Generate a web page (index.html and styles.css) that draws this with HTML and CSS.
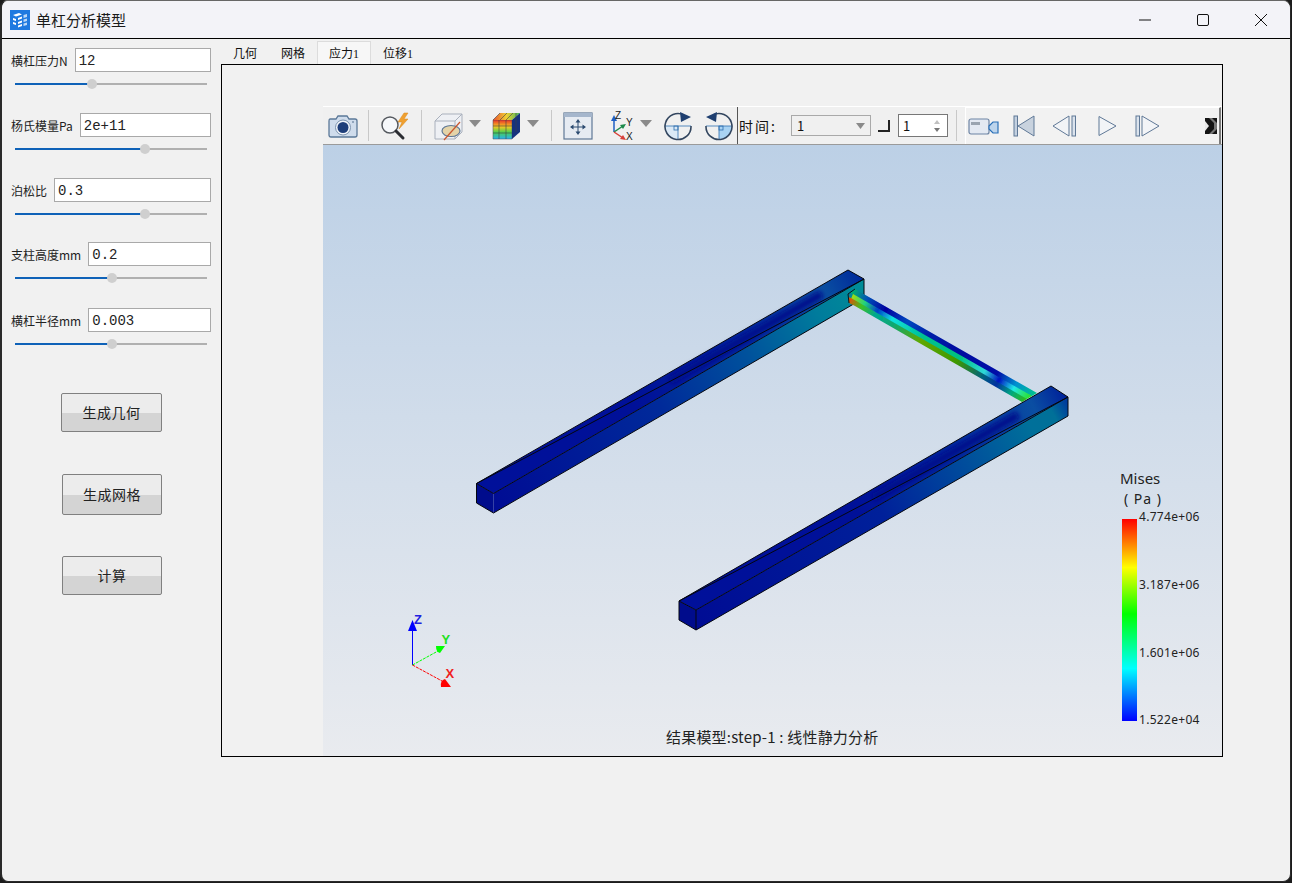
FILE: index.html
```html
<!DOCTYPE html>
<html>
<head>
    <meta charset="UTF-8">
    <title>单杠分析模型</title>
    <link rel="stylesheet" href="styles.css">
</head>
<body>
    <div class="window">
        <div class="titlebar">
            <svg class="app-icon" width="20" height="20" viewBox="0 0 20 20">
                <rect width="20" height="20" fill="#1f7ae0"></rect>
                <path d="M3 5 L9 3 L12 4.500 L6 6.500 Z M3 8 L6 9 L6 11 L3 10 Z M3 12 L6 13 L6 15 L3 14 Z M8 8 L12 6.500 L12 8.500 L8 10 Z M8 12 L12 10.500 L12 12.500 L8 14 Z M8 15.500 L12 14 L12 16 L8 17.500 Z" fill="#fff"></path>
                <path d="M13.500 5 L17 4 L17 7 L13.500 8 Z M13.500 9.500 L17 8.500 L17 11 L13.500 12 Z M13.500 13.500 L17 12.500 L17 15 L13.500 16 Z" fill="#bcd9f7"></path>
            </svg>
            <span class="title">单杠分析模型</span>
            <div class="win-buttons">
                <div class="win-button">
                    <svg width="14" height="14" viewBox="0 0 14 14"><path d="M1 7 H13" stroke="#111" stroke-width="1"></path></svg>
                </div>
                <div class="win-button">
                    <svg width="14" height="14" viewBox="0 0 14 14"><rect x="1.500" y="1.500" width="11" height="11" rx="1.500" fill="none" stroke="#111" stroke-width="1"></rect></svg>
                </div>
                <div class="win-button">
                    <svg width="14" height="14" viewBox="0 0 14 14"><path d="M1 1 L13 13 M13 1 L1 13" stroke="#111" stroke-width="1"></path></svg>
                </div>
            </div>
        </div>

        <div class="main">
            <div class="sidebar">
                <div class="fields">
                    <div class="field">
                        <div class="field-row"><label>横杠压力N</label><input type="text" value="12"></div>
                        <div class="slider"><div class="slider-fill" style="width: 77px"></div><div class="slider-thumb"></div><div class="slider-rest"></div></div>
                    </div>
                    <div class="field">
                        <div class="field-row"><label>杨氏模量Pa</label><input type="text" value="2e+11"></div>
                        <div class="slider"><div class="slider-fill" style="width: 130px"></div><div class="slider-thumb"></div><div class="slider-rest"></div></div>
                    </div>
                    <div class="field">
                        <div class="field-row"><label>泊松比</label><input type="text" value="0.3"></div>
                        <div class="slider"><div class="slider-fill" style="width: 130px"></div><div class="slider-thumb"></div><div class="slider-rest"></div></div>
                    </div>
                    <div class="field">
                        <div class="field-row"><label>支柱高度mm</label><input type="text" value="0.2"></div>
                        <div class="slider"><div class="slider-fill" style="width: 97px"></div><div class="slider-thumb"></div><div class="slider-rest"></div></div>
                    </div>
                    <div class="field">
                        <div class="field-row"><label>横杠半径mm</label><input type="text" value="0.003"></div>
                        <div class="slider"><div class="slider-fill" style="width: 97px"></div><div class="slider-thumb"></div><div class="slider-rest"></div></div>
                    </div>
                </div>
                <div class="actions">
                    <button class="action action-wide">生成几何</button>
                    <button class="action action-tall">生成网格</button>
                    <button class="action">计算</button>
                </div>
            </div>

            <div class="content">
                <div class="tabs">
                    <div class="tab">几何</div>
                    <div class="tab">网格</div>
                    <div class="tab tab-active">应力<span class="tab-num">1</span></div>
                    <div class="tab">位移<span class="tab-num">1</span></div>
                </div>
                <div class="frame">
                    <div class="toolbar">
                        <div class="tool-group tool-group-first">
                            <svg width="32" height="26" viewBox="0 0 32 26">
                                <path d="M3 6 H9 L11 3 H20 L22 6 H28 Q30 6 30 8 V22 Q30 24 28 24 H4 Q2 24 2 22 V8 Q2 6 3 6 Z" fill="#cfdcec" stroke="#5b7898" stroke-width="1.300"></path>
                                <circle cx="16" cy="14.500" r="7.500" fill="#f2f5fa" stroke="#7c93ae"></circle>
                                <circle cx="16" cy="14.500" r="5.500" fill="#1f3f7a"></circle>
                                <circle cx="26" cy="9" r="1" fill="#7c93ae"></circle>
                            </svg>
                        </div>
                        <div class="tool-sep"></div>
                        <div class="tool-group">
                            <svg width="32" height="30" viewBox="0 0 32 30">
                                <circle cx="11" cy="14" r="8" fill="#f6f8fb" stroke="#55595f" stroke-width="1.500"></circle>
                                <path d="M17 20 L24 27" stroke="#2b2d33" stroke-width="3" stroke-linecap="round"></path>
                                <path d="M25 2 L19 11 L23 11 L20 18 L29 8 L25 8 L29 2 Z" fill="#f0a030" stroke="#d98a20" stroke-width=".5"></path>
                            </svg>
                        </div>
                        <div class="tool-sep"></div>
                        <div class="tool-group tool-group-shapes">
                            <svg width="31" height="30" viewBox="0 0 31 30">
                                <path d="M2 10 L9 3 H29 V21 L22 28 H2 Z" fill="#eef0f4" stroke="#a9b0bc"></path>
                                <path d="M2 10 H22 L29 3 M22 10 V28" fill="none" stroke="#a9b0bc"></path>
                                <ellipse cx="18" cy="20" rx="9" ry="5.500" fill="#e4d3a8" stroke="#5f7896" stroke-width="1.200"></ellipse>
                                <path d="M11 29 L27 11" stroke="#c8552e" stroke-width="1.200"></path>
                            </svg>
                            <svg class="drop" width="12" height="7" viewBox="0 0 12 7"><path d="M0 0 H12 L6 7 Z" fill="#8a8a8a"></path></svg>
                            <svg width="30" height="28" viewBox="0 0 30 28">
                                <path d="M1 8 H20 V27 H1 Z" fill="url(#cubeFace)" stroke="#4a4a55" stroke-width=".5"></path>
                                <path d="M1 8 L8 1 H28 L20 8 Z" fill="url(#cubeTop)"></path>
                                <path d="M20 8 L28 1 V20 L20 27 Z" fill="#16337e"></path>
                                <path d="M7 8 V27 M14 8 V27 M1 14 H20 M1 21 H20 M8 1 L1 8 M15 1 L8 8 M21 1 L14 8 M24 1 V20" stroke="#3c3f48" stroke-width=".6" fill="none"></path>
                            </svg>
                            <svg class="drop" width="12" height="7" viewBox="0 0 12 7"><path d="M0 0 H12 L6 7 Z" fill="#8a8a8a"></path></svg>
                        </div>
                        <div class="tool-sep"></div>
                        <div class="tool-group tool-group-wide">
                            <svg width="30" height="28" viewBox="0 0 30 28">
                                <rect x="1" y="1" width="28" height="26" fill="#e6ebf2" stroke="#5f7896" stroke-width="1.200"></rect>
                                <rect x="1" y="1" width="28" height="4" fill="#a5b6cc"></rect>
                                <path d="M15 9 V21 M9 15 H21" stroke="#2b4a70"></path>
                                <path d="M15 7 L12.500 10.500 H17.500 Z M15 23 L12.500 19.500 H17.500 Z M7 15 L10.500 12.500 V17.500 Z M23 15 L19.500 12.500 V17.500 Z" fill="#2b4a70"></path>
                            </svg>
                            <svg class="axes-icon" width="30" height="30" viewBox="0 0 30 30">
                                <path d="M7 21 V8" stroke="#1f5fc4" stroke-width="1.500"></path>
                                <path d="M7 4 L4 10 H10 Z" fill="#1f5fc4"></path>
                                <path d="M7 21 L16 15" stroke="#1c8a4a" stroke-width="1.500"></path>
                                <path d="M19 13 L13 14 L16 18 Z" fill="#1c8a4a"></path>
                                <path d="M7 21 L16 27" stroke="#d8403a" stroke-width="1.500"></path>
                                <path d="M19 29 L13 28 L16 24 Z" fill="#d8403a"></path>
                                <text class="axis-mini" x="8" y="8">Z</text>
                                <text class="axis-mini" x="19" y="15">Y</text>
                                <text class="axis-mini" x="19" y="29">X</text>
                            </svg>
                            <svg class="drop drop-near" width="12" height="7" viewBox="0 0 12 7"><path d="M0 0 H12 L6 7 Z" fill="#8a8a8a"></path></svg>
                            <svg width="30" height="30" viewBox="0 0 30 30">
                                <path d="M2 15 H15 V28 A13 13 0 0 1 2 15 Z" fill="#dbe9f6"></path>
                                <path d="M2 15 H28 M15 15 V28" stroke="#2f6fb0" stroke-width=".8"></path>
                                <rect x="11" y="15" width="4" height="4" fill="none" stroke="#2f6fb0" stroke-width=".8"></rect>
                                <path d="M21 4 A13 13 0 1 0 28 15" fill="none" stroke="#33465f" stroke-width="1.600"></path>
                                <path d="M28 6 L17 1 L18 11 Z" fill="#1f3f70"></path>
                            </svg>
                            <svg width="30" height="30" viewBox="0 0 30 30">
                                <path d="M15 15 H28 A13 13 0 0 1 15 28 Z" fill="#a9d3f3"></path>
                                <path d="M2 15 H28 M15 15 V28" stroke="#2f6fb0" stroke-width=".8"></path>
                                <rect x="15" y="15" width="4" height="4" fill="none" stroke="#2f6fb0" stroke-width=".8"></rect>
                                <path d="M9 4 A13 13 0 1 1 2 15" fill="none" stroke="#33465f" stroke-width="1.600"></path>
                                <path d="M2 6 L13 1 L12 11 Z" fill="#1f3f70"></path>
                            </svg>
                        </div>
                        <div class="tool-sep tool-sep-dark"></div>
                        <div class="time-group">
                            <span class="time-label">时间:</span>
                            <div class="combo"><span>1</span><svg width="9" height="6" viewBox="0 0 9 6"><path d="M0 0 H9 L4.500 6 Z" fill="#8a8a8a"></path></svg></div>
                            <div class="corner"></div>
                            <div class="spin">
                                <span>1</span>
                                <svg width="8" height="14" viewBox="0 0 8 14"><path d="M4 1 L7 5 H1 Z" fill="#c0c0c0"></path><path d="M4 13 L7 9 H1 Z" fill="#777"></path></svg>
                            </div>
                        </div>
                        <div class="tool-sep"></div>
                        <div class="player">
                            <svg width="31" height="18" viewBox="0 0 31 18">
                                <rect x="1" y="2" width="20" height="15" rx="2" fill="#e3e9f2" stroke="#6d84a3" stroke-width="1.200"></rect>
                                <rect x="3" y="5" width="9" height="3" fill="#9aa4b0"></rect>
                                <path d="M21 9 L25 5 H30 V16 H25 L21 12 Z" fill="#bcd4ec" stroke="#2a70b8" stroke-width="1.200"></path>
                            </svg>
                            <svg width="22" height="22" viewBox="0 0 22 22">
                                <rect x="1" y="1" width="3.500" height="20" fill="#c3d0e0" stroke="#5f7896"></rect>
                                <path d="M21 1 V21 L5 11 Z" fill="#c8d2de" stroke="#5f7896"></path>
                            </svg>
                            <svg width="32" height="22" viewBox="0 0 32 22">
                                <path d="M20 1 V21 L4 11 Z" fill="#f2f4f7" stroke="#5f7896"></path>
                                <rect x="23" y="1" width="3.500" height="20" fill="#dbe3ed" stroke="#5f7896"></rect>
                            </svg>
                            <svg width="24" height="22" viewBox="0 0 24 22">
                                <path d="M4 1.500 V20.500 L21 11 Z" fill="#f2f4f7" stroke="#5f7896"></path>
                            </svg>
                            <svg width="28" height="22" viewBox="0 0 28 22">
                                <rect x="3" y="1" width="3.500" height="20" fill="#dbe3ed" stroke="#5f7896"></rect>
                                <path d="M9 1 V21 L26 11 Z" fill="#f2f4f7" stroke="#5f7896"></path>
                            </svg>
                            <svg class="expander" width="12" height="18" viewBox="0 0 12 18">
                                <rect x="0" y="1" width="12" height="16" fill="#141414"></rect>
                                <path d="M0 4 L4 9 L0 14 Z" fill="#e8e8e8"></path>
                                <path d="M4 1 L9 6 V12 L4 17 H7 L12 12 V6 L7 1 Z" fill="#777"></path>
                            </svg>
                        </div>
                    </div>

                    <div class="viewport">
                        <svg class="scene" viewBox="323 145 899 611">
                            <defs>
                                <linearGradient id="cubeFace" x1="0" y1="0" x2="0" y2="1">
                                    <stop offset="0" stop-color="#e8302a"></stop>
                                    <stop offset=".35" stop-color="#f8c820"></stop>
                                    <stop offset=".65" stop-color="#48d050"></stop>
                                    <stop offset="1" stop-color="#28b0f0"></stop>
                                </linearGradient>
                                <linearGradient id="cubeTop" x1="0" y1="0" x2="1" y2="0">
                                    <stop offset="0" stop-color="#e85030"></stop>
                                    <stop offset=".5" stop-color="#f0d030"></stop>
                                    <stop offset="1" stop-color="#40b860"></stop>
                                </linearGradient>
                                <linearGradient id="barTopA" gradientUnits="userSpaceOnUse" x1="476" y1="483" x2="864" y2="279">
                                    <stop offset="0" stop-color="#00109a"></stop>
                                    <stop offset=".4" stop-color="#001098"></stop>
                                    <stop offset=".7" stop-color="#00289c"></stop>
                                    <stop offset=".9" stop-color="#0a52a2"></stop>
                                    <stop offset="1" stop-color="#00289a"></stop>
                                </linearGradient>
                                <linearGradient id="barSideA" gradientUnits="userSpaceOnUse" x1="493" y1="500" x2="864" y2="290">
                                    <stop offset="0" stop-color="#000c94"></stop>
                                    <stop offset=".45" stop-color="#002a9a"></stop>
                                    <stop offset=".68" stop-color="#00509c"></stop>
                                    <stop offset=".88" stop-color="#007c9c"></stop>
                                    <stop offset="1" stop-color="#008c98"></stop>
                                </linearGradient>
                                <linearGradient id="barTopB" gradientUnits="userSpaceOnUse" x1="679" y1="601" x2="1068" y2="397">
                                    <stop offset="0" stop-color="#00109a"></stop>
                                    <stop offset=".45" stop-color="#001098"></stop>
                                    <stop offset=".7" stop-color="#00289c"></stop>
                                    <stop offset=".92" stop-color="#0a4ea2"></stop>
                                    <stop offset="1" stop-color="#00209a"></stop>
                                </linearGradient>
                                <linearGradient id="barSideB" gradientUnits="userSpaceOnUse" x1="696" y1="620" x2="1068" y2="405">
                                    <stop offset="0" stop-color="#000c94"></stop>
                                    <stop offset=".5" stop-color="#00209a"></stop>
                                    <stop offset=".7" stop-color="#00489c"></stop>
                                    <stop offset=".9" stop-color="#00709a"></stop>
                                    <stop offset=".96" stop-color="#007098"></stop>
                                    <stop offset="1" stop-color="#003c9c"></stop>
                                </linearGradient>
                                <linearGradient id="tubeA" gradientUnits="userSpaceOnUse" x1="850" y1="296" x2="1032" y2="398">
                                    <stop offset="0" stop-color="#00b070"></stop>
                                    <stop offset=".08" stop-color="#0050b8"></stop>
                                    <stop offset=".18" stop-color="#0000a0"></stop>
                                    <stop offset=".3" stop-color="#0048c0"></stop>
                                    <stop offset=".42" stop-color="#0020a8"></stop>
                                    <stop offset=".6" stop-color="#0008a0"></stop>
                                    <stop offset=".8" stop-color="#0010a8"></stop>
                                    <stop offset=".9" stop-color="#0090d0"></stop>
                                    <stop offset="1" stop-color="#00c090"></stop>
                                </linearGradient>
                                <linearGradient id="tubeB" gradientUnits="userSpaceOnUse" x1="850" y1="296" x2="1032" y2="398">
                                    <stop offset="0" stop-color="#b0e000"></stop>
                                    <stop offset=".08" stop-color="#20d080"></stop>
                                    <stop offset=".15" stop-color="#0040c8"></stop>
                                    <stop offset=".23" stop-color="#10e0e0"></stop>
                                    <stop offset=".4" stop-color="#00c090"></stop>
                                    <stop offset=".6" stop-color="#00c080"></stop>
                                    <stop offset=".74" stop-color="#30d8d8"></stop>
                                    <stop offset=".82" stop-color="#0010c0"></stop>
                                    <stop offset=".9" stop-color="#20e8e8"></stop>
                                    <stop offset="1" stop-color="#30e010"></stop>
                                </linearGradient>
                                <linearGradient id="tubeC" gradientUnits="userSpaceOnUse" x1="850" y1="296" x2="1032" y2="398">
                                    <stop offset="0" stop-color="#f04800"></stop>
                                    <stop offset=".07" stop-color="#40c020"></stop>
                                    <stop offset=".15" stop-color="#00a890"></stop>
                                    <stop offset=".25" stop-color="#10a870"></stop>
                                    <stop offset=".4" stop-color="#60a800"></stop>
                                    <stop offset=".6" stop-color="#409800"></stop>
                                    <stop offset=".75" stop-color="#006080"></stop>
                                    <stop offset=".82" stop-color="#0030a0"></stop>
                                    <stop offset=".9" stop-color="#00a880"></stop>
                                    <stop offset="1" stop-color="#40c000"></stop>
                                </linearGradient>
                                <linearGradient id="legendBar" x1="0" y1="0" x2="0" y2="1">
                                    <stop offset="0" stop-color="#ff0000"></stop>
                                    <stop offset=".24" stop-color="#ffff00"></stop>
                                    <stop offset=".47" stop-color="#00ff00"></stop>
                                    <stop offset=".74" stop-color="#00ffff"></stop>
                                    <stop offset="1" stop-color="#0000ff"></stop>
                                </linearGradient>
                                <filter id="soft" x="-5%" y="-5%" width="110%" height="110%"><feGaussianBlur stdDeviation=".7"></feGaussianBlur></filter>
                                <filter id="ribbon" filterUnits="userSpaceOnUse" x="600" y="280" width="480" height="260"><feGaussianBlur stdDeviation="2.500"></feGaussianBlur></filter>
                                <clipPath id="tubeClip"><polygon points="855,289 1037,393 1022,402 855,306 849,303 848,295"></polygon></clipPath>
                            </defs>

                            <!-- back bar -->
                            <polygon points="476.500,483.500 493.500,493.500 864,279 848,270" fill="url(#barTopA)"></polygon>
                            <path d="M670 381 L822 294" stroke="#00088c" stroke-width="8" filter="url(#ribbon)"></path>
                            <polygon points="493.500,493.500 493.500,513 864,298 864,279" fill="url(#barSideA)"></polygon>
                            <polygon points="476.500,483.500 493.500,493.500 493.500,513 476.500,503" fill="#000c8c"></polygon>
                            <polygon points="476.500,483.500 493.500,493.500 864,279 864,298 493.500,513 476.500,503 476.500,483.500 848,270 864,279" fill="none" stroke="#05070f" stroke-width="1"></polygon>

                            <!-- cross tube -->
                            <g clip-path="url(#tubeClip)">
                                <g filter="url(#soft)">
                                    <polygon points="840,280 1045,396 1032,397 853,295" fill="url(#tubeA)"></polygon>
                                    <polygon points="853,294 1032,396 1027,400 851,299" fill="url(#tubeB)"></polygon>
                                    <polygon points="840,295 851,298 1027,399 1015,410 840,305" fill="url(#tubeC)"></polygon>
                                </g>
                            </g>
                            <path d="M849 303 L848 294 L855 289" fill="none" stroke="#06121e"></path>

                            <!-- front bar -->
                            <polygon points="679,601 696,610 1068,397 1051,386" fill="url(#barTopB)"></polygon>
                            <path d="M873 498 L1018 415" stroke="#00088c" stroke-width="8" filter="url(#ribbon)"></path>
                            <polygon points="696,610 696,630 1068,416 1068,397" fill="url(#barSideB)"></polygon>
                            <polygon points="679,601 696,610 696,630 679,620" fill="#000c8c"></polygon>
                            <polygon points="679,601 696,610 1068,397 1068,416 696,630 679,620 679,601 1051,386 1068,397" fill="none" stroke="#05070f" stroke-width="1"></polygon>
                            <path d="M696,610 V630" stroke="#05070f"></path>

                            <!-- triad -->
                            <path d="M412.500 665 V630" stroke="#0000ff" stroke-width="1"></path>
                            <path d="M412.500 620 L408 631 H417 Z" fill="#0000ff"></path>
                            <text class="axis-z" x="414" y="624">Z</text>
                            <path d="M412.500 665 L438 651" stroke="#00ff00" stroke-width="1" stroke-dasharray="3 1"></path>
                            <path d="M445 646 L436 646 Q436 652 440 653 Z" fill="#00ff00"></path>
                            <text class="axis-y" x="441.500" y="644">Y</text>
                            <path d="M412.500 665 L442 681" stroke="#ff0000" stroke-width="1" stroke-dasharray="3 1"></path>
                            <path d="M451 687 L441 687 Q440 680 445 679 Z" fill="#ff0000"></path>
                            <text class="axis-x" x="445.500" y="678">X</text>

                            <!-- legend -->
                            <text class="legend-title" x="1120" y="484">Mises</text>
                            <text class="legend-unit" x="1124" y="504">( Pa )</text>
                            <rect x="1122" y="519" width="15" height="202" fill="url(#legendBar)"></rect>
                            <text class="legend-num" x="1139" y="521">4.774e+06</text>
                            <text class="legend-num" x="1139" y="589">3.187e+06</text>
                            <text class="legend-num" x="1139" y="657">1.601e+06</text>
                            <text class="legend-num" x="1139" y="724">1.522e+04</text>

                            <text class="caption" x="666" y="743">结果模型:step-1 : 线性静力分析</text>
                        </svg>
                    </div>
                </div>
            </div>
        </div>
    </div>
</body>
</html>
```

FILE: styles.css
```css
* {
    margin: 0;
    padding: 0;
    box-sizing: border-box;
    font-family: "Noto Sans CJK SC", "Noto Sans", sans-serif;
}

html, body {
    width: 1292px;
    height: 883px;
    overflow: hidden;
}

body {
    background-color: #1c1c1c;
}

.window {
    width: 1291px;
    height: 882px;
    display: flex;
    flex-direction: column;
    background: #f1f1f1;
    border: 1px solid #2a2a2a;
    border-left-width: 2px;
    border-top-color: #666;
    border-radius: 8px;
    overflow: hidden;
}

.titlebar {
    height: 37px;
    flex-shrink: 0;
    display: flex;
    align-items: center;
    padding-left: 8px;
    background: #f3f3f8;
}

.app-icon {
    flex-shrink: 0;
}

.title {
    margin-left: 6px;
    font-size: 15px;
    color: #1a1a1a;
}

.win-buttons {
    display: flex;
    margin-left: auto;
}

.win-button {
    width: 58px;
    height: 37px;
    display: flex;
    align-items: center;
    justify-content: center;
}

.main {
    flex: 1;
    display: flex;
    border-top: 1px solid #000;
}

.sidebar {
    width: 219px;
    flex-shrink: 0;
    padding: 9px 10px 0 9px;
}

.field {
    margin-bottom: 24px;
}

.field:nth-child(4) {
    margin-top: -1px;
    margin-bottom: 25px;
}

.field-row {
    display: flex;
    align-items: center;
    gap: 7px;
}

.field-row label {
    font-size: 12px;
    color: #222;
    white-space: nowrap;
}

.field-row input {
    flex: 1;
    min-width: 0;
    height: 24px;
    padding: 1px 0 0 3px;
    border: 1px solid #a9a9a9;
    background: #fff;
    font-family: "Liberation Mono", monospace;
    font-size: 14px;
    color: #222;
    outline: none;
}

.slider {
    display: flex;
    align-items: center;
    height: 10px;
    margin: 7px 4px 0 4px;
}

.slider-fill {
    height: 2px;
    background: #0f62b8;
}

.slider-thumb {
    width: 10px;
    height: 10px;
    margin: 0 -5px;
    border-radius: 50%;
    background: #cfcfcf;
    position: relative;
}

.slider-rest {
    flex: 1;
    height: 2px;
    background: #b0b0b0;
}

.actions {
    display: flex;
    flex-direction: column;
    align-items: flex-end;
    padding-right: 49px;
    gap: 41px;
    margin-top: 20px;
}

.action {
    width: 100px;
    height: 39px;
    padding-bottom: 2px;
    border: 1px solid #808080;
    border-radius: 2px;
    background: linear-gradient(#ececec 0, #ececec 50%, #d4d4d4 51%, #d4d4d4 100%);
    font-size: 14px;
    letter-spacing: .5px;
    color: #222;
}

.action-wide {
    width: 101px;
    margin-top: 20px;
    margin-bottom: 1px;
}

.action-tall {
    height: 41px;
}

.content {
    flex: 1;
    padding: 2px 0 0 0;
}

.tabs {
    display: flex;
    height: 23px;
}

.tab {
    padding: 0 12px;
    font-size: 12px;
    line-height: 23px;
    color: #111;
}

.tab-active {
    background: #f7f7f7;
    border: 1px solid #dcdcdc;
    border-bottom: none;
    padding: 0 11px;
    line-height: 22px;
}

.tab-num {
    font-family: "Liberation Serif", serif;
    font-size: 12px;
}

.frame {
    width: 1002px;
    height: 693px;
    display: flex;
    flex-direction: column;
    padding: 41px 0 0 101px;
    border: 1px solid #000;
}

.toolbar {
    height: 39px;
    flex-shrink: 0;
    display: flex;
    background: #f0f0f0;
    border-top: 1px solid #fff;
    border-bottom: 1px solid #9a9a9a;
}

.tool-group {
    display: flex;
    align-items: center;
    gap: 11px;
    padding: 0 10px;
}

.tool-group-first {
    padding: 0 9px 0 4px;
}

.tool-group-shapes {
    padding: 0 12px 0 11px;
}

.tool-group-wide {
    padding: 0 3px 0 11px;
}

.drop {
    margin-left: -6px;
    margin-bottom: 4px;
}

.drop-near {
    margin-left: -8px;
}

.axes-icon {
    margin-left: 3px;
}

.axis-mini {
    font-family: "Liberation Sans", sans-serif;
    font-size: 10px;
    fill: #222;
}

.tool-sep {
    width: 1px;
    margin: 3px 0;
    flex-shrink: 0;
    background: #c8c8c8;
}

.tool-sep-dark {
    margin: 0;
    background: #555;
}

.time-group {
    display: flex;
    align-items: center;
    width: 218px;
    flex-shrink: 0;
    padding-left: 1px;
}

.time-label {
    width: 52px;
    font-size: 14px;
    letter-spacing: 2px;
    color: #111;
}

.combo {
    width: 80px;
    height: 21px;
    display: flex;
    align-items: center;
    justify-content: space-between;
    padding: 0 5px;
    border: 1px solid #a9a9a9;
    font-family: "Liberation Mono", monospace;
    font-size: 13px;
    color: #111;
}

.corner {
    width: 12px;
    height: 12px;
    margin: 0 8px 0 7px;
    border-right: 2px solid #222;
    border-bottom: 2px solid #222;
}

.spin {
    width: 50px;
    height: 23px;
    display: flex;
    align-items: center;
    justify-content: space-between;
    padding: 0 6px 0 4px;
    background: #fff;
    border: 1px solid #777;
    font-family: "Liberation Mono", monospace;
    font-size: 13px;
    color: #111;
}

.player {
    flex: 1;
    display: flex;
    align-items: center;
    gap: 14px;
    margin: 0 1px 0 8px;
    padding: 0 2px 0 2px;
    background: #f2f2f2;
    border-top: 1px solid #fff;
    border-left: 1px solid #fff;
    border-right: 2px solid #7a7a7a;
}

.expander {
    margin-left: auto;
}

.viewport {
    flex: 1;
    background: linear-gradient(#bcd0e6, #e9ebef);
}

.scene {
    display: block;
    width: 899px;
    height: 611px;
}

.axis-z, .axis-y, .axis-x {
    font-family: "Liberation Sans", sans-serif;
    font-size: 13px;
    font-weight: 700;
}

.axis-z {
    fill: #2020e0;
}

.axis-y {
    fill: #20e020;
}

.axis-x {
    fill: #f02020;
}

.legend-title {
    font-family: "Noto Sans", sans-serif;
    font-size: 15px;
    fill: #222;
}

.legend-unit {
    font-family: "Noto Sans", sans-serif;
    font-size: 14px;
    letter-spacing: 1px;
    fill: #222;
}

.legend-num {
    font-family: "Noto Sans", sans-serif;
    font-size: 12px;
    letter-spacing: .3px;
    fill: #222;
}

.caption {
    font-size: 15px;
    letter-spacing: .2px;
    fill: #222;
}
```
